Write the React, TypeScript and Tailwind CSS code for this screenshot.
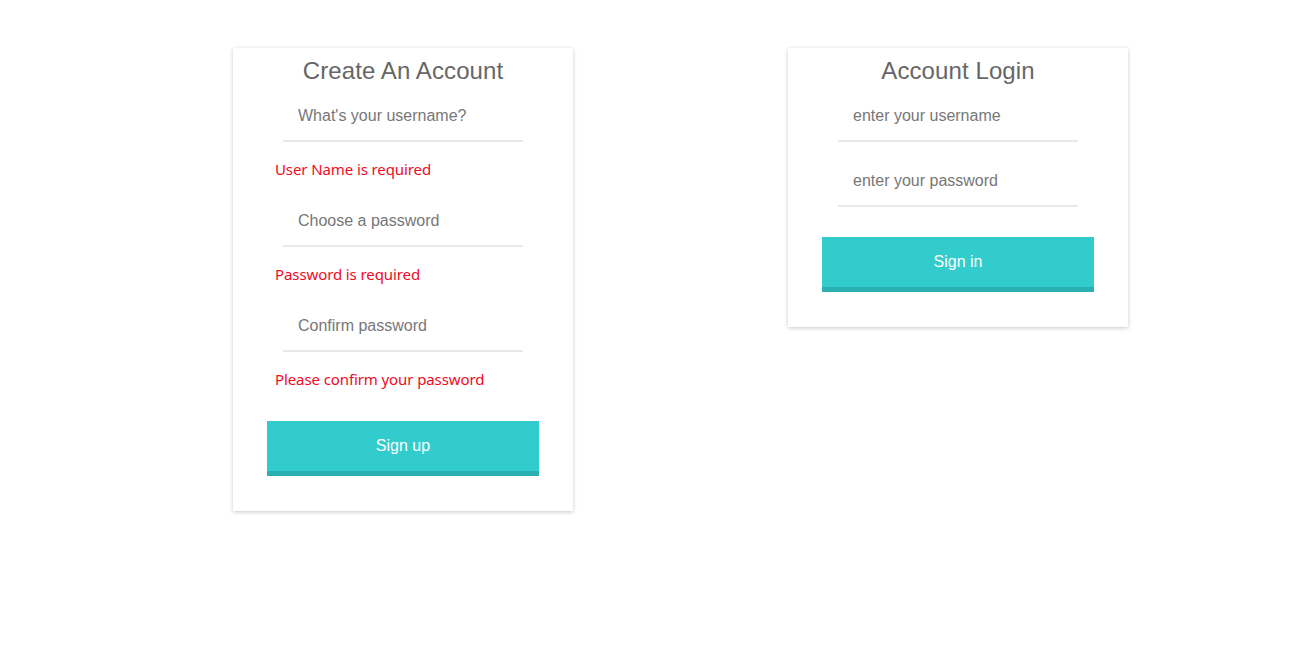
import React from "react";

const arial = { fontFamily: '"Liberation Sans", Arial, sans-serif' };

function Field({ placeholder, type = "text" }: { placeholder: string; type?: string }) {
  return (
    <input
      type={type}
      placeholder={placeholder}
      className="block w-[240px] h-[52px] mx-auto px-[15px] pt-[2px] border-b-2 border-[#e8e8e8] bg-white text-[16px] text-[#555] placeholder:text-[#777] outline-none"
      style={arial}
    />
  );
}

function ErrorMsg({ children }: { children: React.ReactNode }) {
  return (
    <div
      className="pl-[42px] pt-[15px] pb-[14px] h-[53px] text-[15px] leading-[24px] text-[#f00a1e] tracking-[-0.1px]"
      style={{ fontFamily: '"Noto Sans", "Open Sans", sans-serif' }}
    >
      {children}
    </div>
  );
}

function Button({ children }: { children: React.ReactNode }) {
  return (
    <button
      className="block w-[272px] h-[55px] mx-auto bg-[#33cccc] border-b-[5px] border-[#2bb0b0] text-white text-[16px]"
      style={arial}
    >
      {children}
    </button>
  );
}

function Title({ children }: { children: React.ReactNode }) {
  return (
    <h2 className="pt-[8px] pb-[4px] text-center text-[24px] leading-[30px] text-[#666] tracking-[0.1px]" style={arial}>
      {children}
    </h2>
  );
}

export default function App() {
  return (
    <div className="min-h-[660px] w-full bg-white">
      <div className="flex items-start pt-[48px] pl-[233px] gap-[215px]">
        <div className="w-[340px] bg-white shadow-[0_1px_4px_rgba(0,0,0,0.22)] pb-[35px]">
          <Title>Create An Account</Title>
          <Field placeholder="What's your username?" />
          <ErrorMsg>User Name is required</ErrorMsg>
          <Field placeholder="Choose a password" type="password" />
          <ErrorMsg>Password is required</ErrorMsg>
          <Field placeholder="Confirm password" type="password" />
          <ErrorMsg>Please confirm your password</ErrorMsg>
          <div className="pt-[16px]">
            <Button>Sign up</Button>
          </div>
        </div>
        <div className="w-[340px] bg-white shadow-[0_1px_4px_rgba(0,0,0,0.22)] pb-[35px]">
          <Title>Account Login</Title>
          <Field placeholder="enter your username" />
          <div className="h-[13px]" />
          <Field placeholder="enter your password" type="password" />
          <div className="pt-[30px]">
            <Button>Sign in</Button>
          </div>
        </div>
      </div>
    </div>
  );
}
